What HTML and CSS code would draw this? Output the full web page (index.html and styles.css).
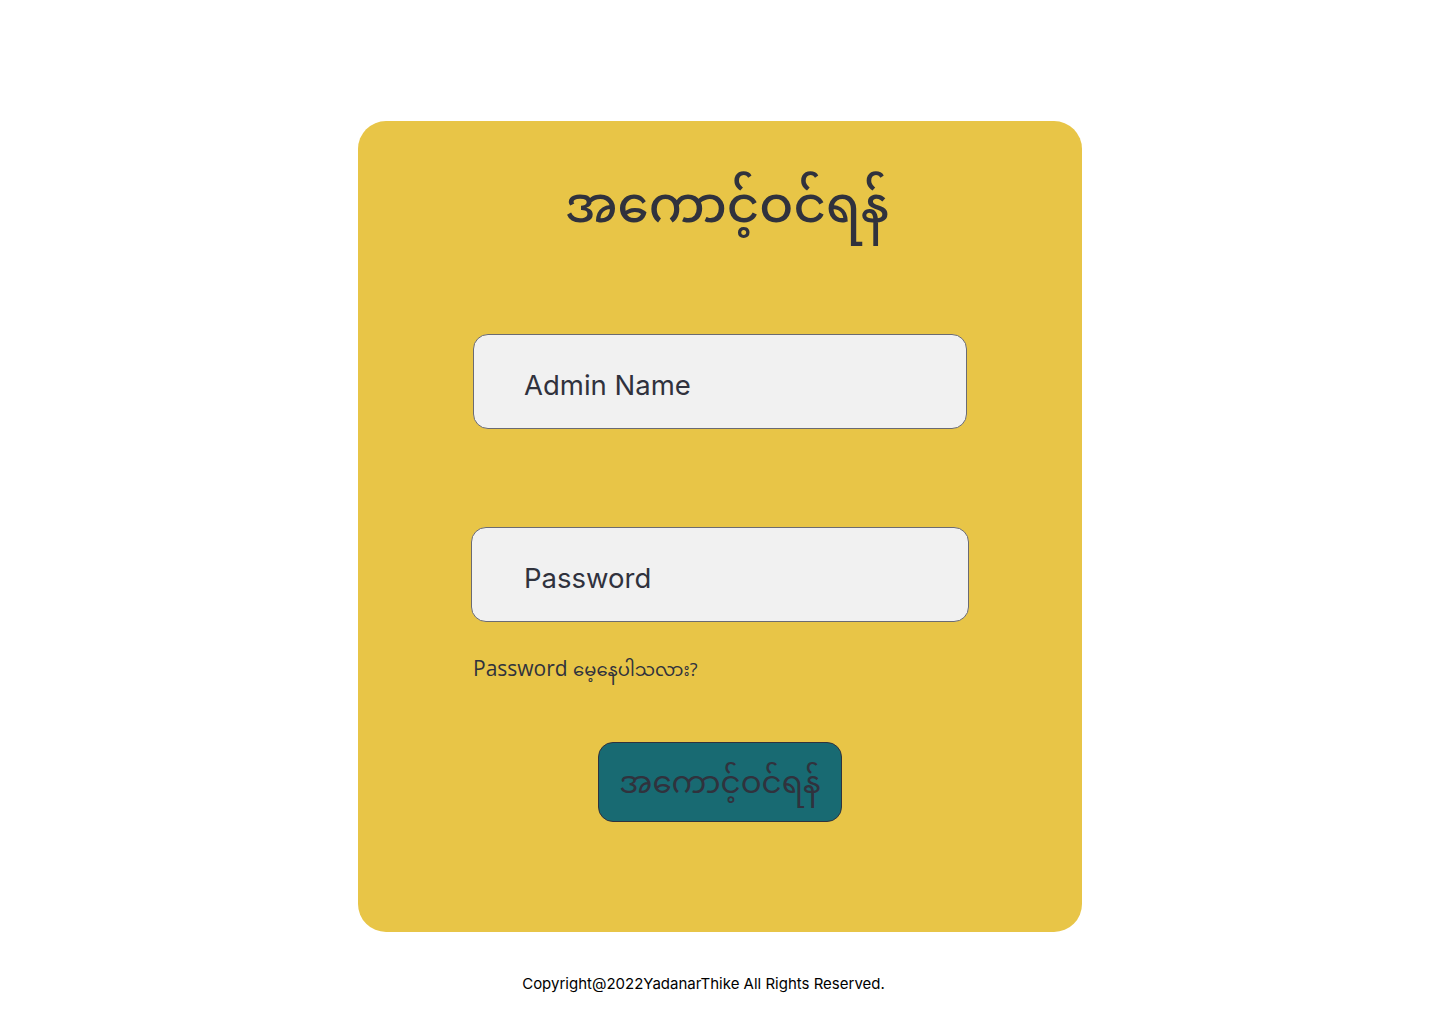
FILE: index.html
```html
<!DOCTYPE html>
<html lang="my">
<head>
<meta charset="utf-8">
<title>Login</title>
<link rel="stylesheet" href="styles.css">
</head>
<body>
<main class="page">
  <form class="card">
    <h1 class="title">အကောင့်ဝင်ရန်</h1>
    <input class="field field-name" type="text" placeholder="Admin Name">
    <input class="field field-pass" type="password" placeholder="Password">
    <a class="forgot" href="#">Password <span class="forgot-my">မေ့နေပါသလား?</span></a>
    <button class="submit" type="button">အကောင့်ဝင်ရန်</button>
  </form>
  <footer class="footer">Copyright@2022YadanarThike All Rights Reserved.</footer>
</main>
</body>
</html>
```

FILE: styles.css
```css
html, body {
  margin: 0;
  padding: 0;
  background: #ffffff;
}
.page {
  display: flex;
  flex-direction: column;
  align-items: center;
  padding-top: 121px;
  font-family: "Noto Sans", "Noto Sans Myanmar", "Padauk", "Myanmar Text", sans-serif;
}
.card {
  box-sizing: border-box;
  width: 724px;
  height: 811px;
  background: #e8c547;
  border-radius: 28px;
  display: flex;
  flex-direction: column;
  align-items: center;
  padding-top: 32px;
}
.title {
  margin: 0 0 8px 14px;
  font-weight: 500;
  font-size: 50px;
  line-height: 100px;
  color: #30323d;
}
.field {
  box-sizing: border-box;
  height: 95px;
  background: #f1f1f1;
  border: 1px solid #6b6b72;
  border-radius: 15px;
  padding: 7px 0 0 50px;
  font-family: "Inter", "Liberation Sans", sans-serif;
  font-size: 27.5px;
  color: #30323d;
  outline: none;
}
.field::placeholder {
  color: #30323d;
  opacity: 1;
}
.field-name {
  width: 494px;
  margin-top: 73px;
}
.field-pass {
  width: 498px;
  margin-top: 98px;
  padding-left: 52px;
}
.forgot {
  align-self: flex-start;
  margin: 32px 0 0 115px;
  font-family: "Open Sans", "Noto Sans", "Noto Sans Myanmar", sans-serif;
  font-size: 21px;
  line-height: 28px;
  color: #30323d;
  text-decoration: none;
}
.forgot-my {
  font-size: 18px;
}
.submit {
  box-sizing: border-box;
  width: 244px;
  height: 80px;
  margin-top: 59px;
  background: #186a72;
  border: 1px solid #30323d;
  border-radius: 15px;
  font-family: "Noto Sans", "Noto Sans Myanmar", sans-serif;
  font-size: 31px;
  color: #30323d;
  padding: 8px 0 0;
}
.footer {
  margin-top: 42px;
  padding-right: 33px;
  font-family: "Inter", "Liberation Sans", sans-serif;
  font-size: 15px;
  line-height: 20px;
  color: #000000;
}
```
